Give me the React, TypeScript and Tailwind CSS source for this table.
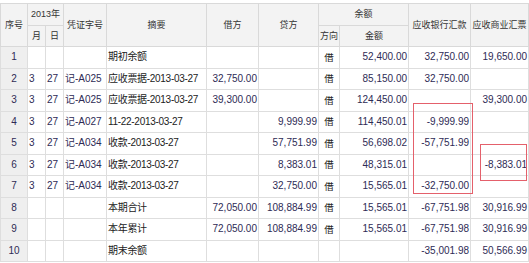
import React from 'react';

type Row = {
  no: string;
  m: string;
  d: string;
  voucher: string;
  summary: string;
  debit: string;
  credit: string;
  dir: string;
  balance: string;
  bank: string;
  bill: string;
};

const rows: Row[] = [
  { no: '1', m: '', d: '', voucher: '', summary: '期初余额', debit: '', credit: '', dir: '借', balance: '52,400.00', bank: '32,750.00', bill: '19,650.00' },
  { no: '2', m: '3', d: '27', voucher: '记-A025', summary: '应收票据-2013-03-27', debit: '32,750.00', credit: '', dir: '借', balance: '85,150.00', bank: '32,750.00', bill: '' },
  { no: '3', m: '3', d: '27', voucher: '记-A025', summary: '应收票据-2013-03-27', debit: '39,300.00', credit: '', dir: '借', balance: '124,450.00', bank: '', bill: '39,300.00' },
  { no: '4', m: '3', d: '27', voucher: '记-A027', summary: '11-22-2013-03-27', debit: '', credit: '9,999.99', dir: '借', balance: '114,450.01', bank: '-9,999.99', bill: '' },
  { no: '5', m: '3', d: '27', voucher: '记-A034', summary: '收款-2013-03-27', debit: '', credit: '57,751.99', dir: '借', balance: '56,698.02', bank: '-57,751.99', bill: '' },
  { no: '6', m: '3', d: '27', voucher: '记-A034', summary: '收款-2013-03-27', debit: '', credit: '8,383.01', dir: '借', balance: '48,315.01', bank: '', bill: '-8,383.01' },
  { no: '7', m: '3', d: '27', voucher: '记-A034', summary: '收款-2013-03-27', debit: '', credit: '32,750.00', dir: '借', balance: '15,565.01', bank: '-32,750.00', bill: '' },
  { no: '8', m: '', d: '', voucher: '', summary: '本期合计', debit: '72,050.00', credit: '108,884.99', dir: '借', balance: '15,565.01', bank: '-67,751.98', bill: '30,916.99' },
  { no: '9', m: '', d: '', voucher: '', summary: '本年累计', debit: '72,050.00', credit: '108,884.99', dir: '借', balance: '15,565.01', bank: '-67,751.98', bill: '30,916.99' },
  { no: '10', m: '', d: '', voucher: '', summary: '期末余额', debit: '', credit: '', dir: '', balance: '', bank: '-35,001.98', bill: '50,566.99' },
];

const th = 'border border-[#d9d9d9] font-normal text-[#333] text-[9px] leading-none p-0 text-center';
const td = 'border border-[#dedede] p-0 whitespace-nowrap overflow-hidden leading-none';
const num = `${td} text-right pr-[1px]`;

const App: React.FC = () => {
  return (
    <div
      className="relative w-[529px] h-[263px] overflow-hidden bg-white pt-[3px]"
      style={{ fontFamily: '"Liberation Sans", "Noto Sans CJK SC", sans-serif' }}
    >
      <table className="table-fixed border-collapse w-[528px] border-t border-t-[#c3cbd6] text-[10px] text-[#2e2b55]">
        <colgroup>
          <col className="w-[27px]" />
          <col className="w-[18px]" />
          <col className="w-[18px]" />
          <col className="w-[43px]" />
          <col className="w-[100px]" />
          <col className="w-[52px]" />
          <col className="w-[60px]" />
          <col className="w-[21px]" />
          <col className="w-[69px]" />
          <col className="w-[62px]" />
          <col className="w-[58px]" />
        </colgroup>
        <thead className="bg-[#f3f3f3]">
          <tr className="h-[22px]">
            <th rowSpan={2} className={th}>序号</th>
            <th colSpan={2} className={th}>2013年</th>
            <th rowSpan={2} className={th}>凭证字号</th>
            <th rowSpan={2} className={th}>摘要</th>
            <th rowSpan={2} className={th}>借方</th>
            <th rowSpan={2} className={th}>贷方</th>
            <th colSpan={2} className={th}>余额</th>
            <th rowSpan={2} className={th}>应收银行汇款</th>
            <th rowSpan={2} className={th}>应收商业汇票</th>
          </tr>
          <tr className="h-[21px]">
            <th className={th}>月</th>
            <th className={th}>日</th>
            <th className={th}>方向</th>
            <th className={th}>金额</th>
          </tr>
        </thead>
        <tbody>
          {rows.map((r) => (
            <tr key={r.no} className="h-[21.5px]">
              <td className={`${td} bg-[#efefef] text-center`}>{r.no}</td>
              <td className={`${td} pl-[1px]`}>{r.m}</td>
              <td className={`${td} pl-[1px]`}>{r.d}</td>
              <td className={`${td} pl-[1px]`}>{r.voucher}</td>
              <td className={`${td} pl-[1px] text-[#222] tracking-[-0.3px]`}>{r.summary}</td>
              <td className={num}>{r.debit}</td>
              <td className={num}>{r.credit}</td>
              <td className={`${td} text-center text-[9.5px] text-[#222]`}>{r.dir}</td>
              <td className={num}>{r.balance}</td>
              <td className={num}>{r.bank}</td>
              <td className={num}>{r.bill}</td>
            </tr>
          ))}
        </tbody>
      </table>

      {/* annotation boxes */}
      <div className="absolute left-[413px] top-[103px] w-[60px] h-[91px] border border-[#e4606b]" />
      <div className="absolute left-[480px] top-[144px] w-[47px] h-[37px] border border-[#e4606b]" />
    </div>
  );
};

export default App;
